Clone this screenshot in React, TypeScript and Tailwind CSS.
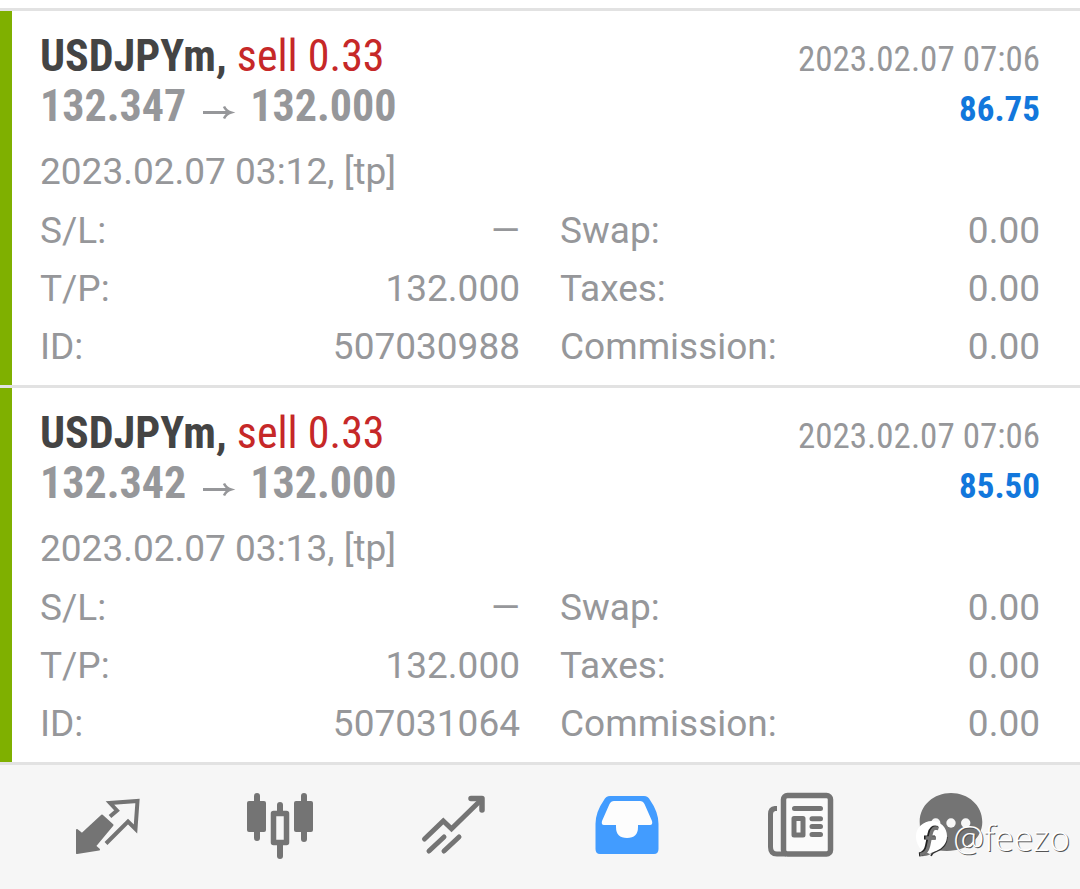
import type { ReactNode } from "react";

type Deal = {
  id: string;
  symbol: string;
  side: string;
  volume: string;
  open: string;
  close: string;
  openedAt: string;
  closedAt: string;
  profit: string;
};

const deals: Deal[] = [
  {
    id: "507030988",
    symbol: "USDJPYm",
    side: "sell",
    volume: "0.33",
    open: "132.347",
    close: "132.000",
    openedAt: "2023.02.07 03:12",
    closedAt: "2023.02.07 07:06",
    profit: "86.75",
  },
  {
    id: "507031064",
    symbol: "USDJPYm",
    side: "sell",
    volume: "0.33",
    open: "132.342",
    close: "132.000",
    openedAt: "2023.02.07 03:13",
    closedAt: "2023.02.07 07:06",
    profit: "85.50",
  },
];

function Field({ label, value }: { label: string; value: string }) {
  return (
    <div className="flex justify-between">
      <dt>{label}</dt>
      <dd>{value}</dd>
    </div>
  );
}

function DealCard({ deal }: { deal: Deal }) {
  return (
    <li className="flex border-b-3 border-[#e2e2e2]">
      <div className="w-3 shrink-0 bg-[#7fb000]" />
      <div className="flex-1 pt-5 pr-10 pb-[9px] pl-7">
        <div className="font-['Roboto_Condensed','Liberation_Sans_Narrow',Roboto,sans-serif] text-[44px] leading-[50px]">
          <div className="flex items-baseline justify-between">
            <h2>
              <span className="font-bold text-[#444444]">{deal.symbol},</span>{" "}
              <span className="text-[#c62828]">
                {deal.side} {deal.volume}
              </span>
            </h2>
            <time className="text-[35px] leading-10">{deal.closedAt}</time>
          </div>
          <div className="flex items-baseline justify-between font-bold">
            <p className="flex items-center gap-3">
              <span>{deal.open}</span>
              <svg className="mt-3 h-[14px] w-10" viewBox="0 0 40 14" fill="none" stroke="currentColor" strokeWidth="3">
                <path d="M5 7.5H31" />
                <path d="M26 1.5Q28 6 33 7.5Q28 9 26 13.5" strokeWidth="2.5" />
              </svg>
              <span>{deal.close}</span>
            </p>
            <p className="text-[35px] leading-10 text-[#1277dc]">{deal.profit}</p>
          </div>
        </div>
        <p className="mt-3">{deal.openedAt}, [tp]</p>
        <dl className="mt-px grid grid-cols-2 gap-x-10">
          <Field label="S/L:" value="—" />
          <Field label="Swap:" value="0.00" />
          <Field label="T/P:" value={deal.close} />
          <Field label="Taxes:" value="0.00" />
          <Field label="ID:" value={deal.id} />
          <Field label="Commission:" value="0.00" />
        </dl>
      </div>
    </li>
  );
}

function Icon({ children }: { children: ReactNode }) {
  return (
    <svg className="size-[68px]" viewBox="0 0 68 68" fill="none" aria-hidden="true">
      {children}
    </svg>
  );
}

function QuotesIcon() {
  return (
    <Icon>
      <path
        d="M4 38L9 42L29 23.5L39.5 33L22 54L26 57.5L4 61Z"
        fill="currentColor"
        stroke="currentColor"
        strokeWidth="2"
        strokeLinejoin="round"
      />
      <path
        d="M37 24.5L44 18.5L37 11L64.5 9L62.5 37L55 29.5L33 51.5"
        stroke="currentColor"
        strokeWidth="4"
      />
    </Icon>
  );
}

function ChartIcon() {
  return (
    <Icon>
      <g fill="currentColor">
        <rect x="1" y="9" width="19" height="31" rx="2" />
        <rect x="8" y="1" width="6" height="48" rx="3" />
        <rect x="48" y="9" width="19" height="31" rx="2" />
        <rect x="55" y="1" width="6" height="49" rx="3" />
        <rect x="31" y="10" width="6" height="12" rx="3" />
        <rect x="31" y="50" width="6" height="17" rx="3" />
      </g>
      <rect x="27.5" y="21.5" width="13" height="29" stroke="currentColor" strokeWidth="5.5" strokeLinejoin="round" />
    </Icon>
  );
}

function TradeIcon() {
  return (
    <Icon>
      <g stroke="currentColor" strokeWidth="5" strokeLinecap="round">
        <path d="M5.5 47L24.3 29L32.5 36.7L62 8" />
        <path d="M52 6.5H63V18" strokeWidth="5.5" strokeLinejoin="round" />
        <path d="M10 59L25 45M25 59L40 45" />
      </g>
    </Icon>
  );
}

function HistoryIcon() {
  return (
    <Icon>
      <path
        d="M17 4H51Q55 4 57 8Q65.5 20 65.5 32V57Q65.5 62 61 62H7Q2.5 62 2.5 57V32Q2.5 20 11 8Q13 4 17 4Z"
        fill="#429cff"
      />
      <path
        d="M21 9H47Q50 9 51.5 12L59 29Q60 33 57 33H45V35Q45 46 34 46Q23 46 23 35V33H11Q8 33 9 29L16.5 12Q18 9 21 9Z"
        fill="#fdfdfd"
      />
    </Icon>
  );
}

function NewsIcon() {
  return (
    <Icon>
      <rect x="17.5" y="3.5" width="47" height="58.5" rx="4" fill="#fafafa" stroke="currentColor" strokeWidth="5.5" />
      <path d="M11 16.5H9Q4.5 17 4.5 22V55Q4.5 62 11 62H20" stroke="currentColor" strokeWidth="5" />
      <rect x="28" y="26.5" width="9" height="16.5" stroke="currentColor" strokeWidth="5" strokeLinejoin="round" />
      <path
        d="M28.5 16.5H54.5M46 26.8H54.5M46 34.6H54.5M46 42.4H54.5"
        stroke="currentColor"
        strokeWidth="5"
        strokeLinecap="round"
      />
    </Icon>
  );
}

function MessagesIcon() {
  return (
    <Icon>
      <path
        d="M34 1C17 1 2.7 13 2.7 30C2.7 43 8 50 8 55C7 59 3 62 3 64C9 65 15 62 20 58C46 63 65.3 48 65.3 30C65.3 13 51 1 34 1Z"
        fill="currentColor"
      />
      <g fill="#f7f7f7">
        <circle cx="18.7" cy="31" r="4.7" />
        <circle cx="34" cy="31" r="4.7" />
        <circle cx="48.7" cy="31" r="4.7" />
      </g>
    </Icon>
  );
}

function Watermark() {
  return (
    <div className="absolute right-[10px] bottom-[29px] flex items-center gap-[5px] font-['Open_Sans','Noto_Sans',sans-serif] text-[35px] leading-[44px] font-light text-white [text-shadow:1px_1px_0_#555]">
      <svg className="h-10 w-8" viewBox="0 0 32 40" fill="none" aria-hidden="true">
        <path d="M15 38C16 35 18 34 20 33.5C27 31 31 26 31 19" stroke="#333" strokeWidth="1.5" />
        <path d="M16 3C7 3 0 10 0 18C0 25 3 30 7 33L14 36C16 34 18 34 20 33C27 30 31 25 31 18C31 10 25 3 16 3Z" fill="#fff" />
        <path
          d="M21.5 10C17 8.5 14.5 11 13.5 16L11 28C10 33 8 36 3 36.5M8 19.5H19"
          stroke="#222"
          strokeWidth="4"
        />
        <path d="M22.5 10.5C18 9 16 11 15 16L12.5 28C11.5 33 9 36 4 36.5M9.5 20H20" stroke="#747474" strokeWidth="3.5" />
      </svg>
      <span>@feezo</span>
    </div>
  );
}

const tabs = [
  { name: "Quotes", icon: <QuotesIcon /> },
  { name: "Chart", icon: <ChartIcon /> },
  { name: "Trade", icon: <TradeIcon /> },
  { name: "History", icon: <HistoryIcon /> },
  { name: "News", icon: <NewsIcon /> },
];

export default function App() {
  return (
    <div className="flex min-h-screen flex-col bg-white font-[Roboto,sans-serif] text-[37px] leading-[58px] text-[#96979a]">
      <main className="pt-2">
        <ul className="border-t-3 border-[#e2e2e2]">
          {deals.map((deal) => (
            <DealCard key={deal.id} deal={deal} />
          ))}
        </ul>
      </main>
      <nav className="relative grid flex-1 grid-cols-6 items-start bg-[#f6f6f6] px-5 pt-[27px] pb-7 text-[#747474]">
        {tabs.map((tab) => (
          <button key={tab.name} aria-label={tab.name} className="flex justify-center">
            {tab.icon}
          </button>
        ))}
        <button aria-label="Messages" className="flex pl-[30px]">
          <MessagesIcon />
        </button>
        <Watermark />
      </nav>
    </div>
  );
}
